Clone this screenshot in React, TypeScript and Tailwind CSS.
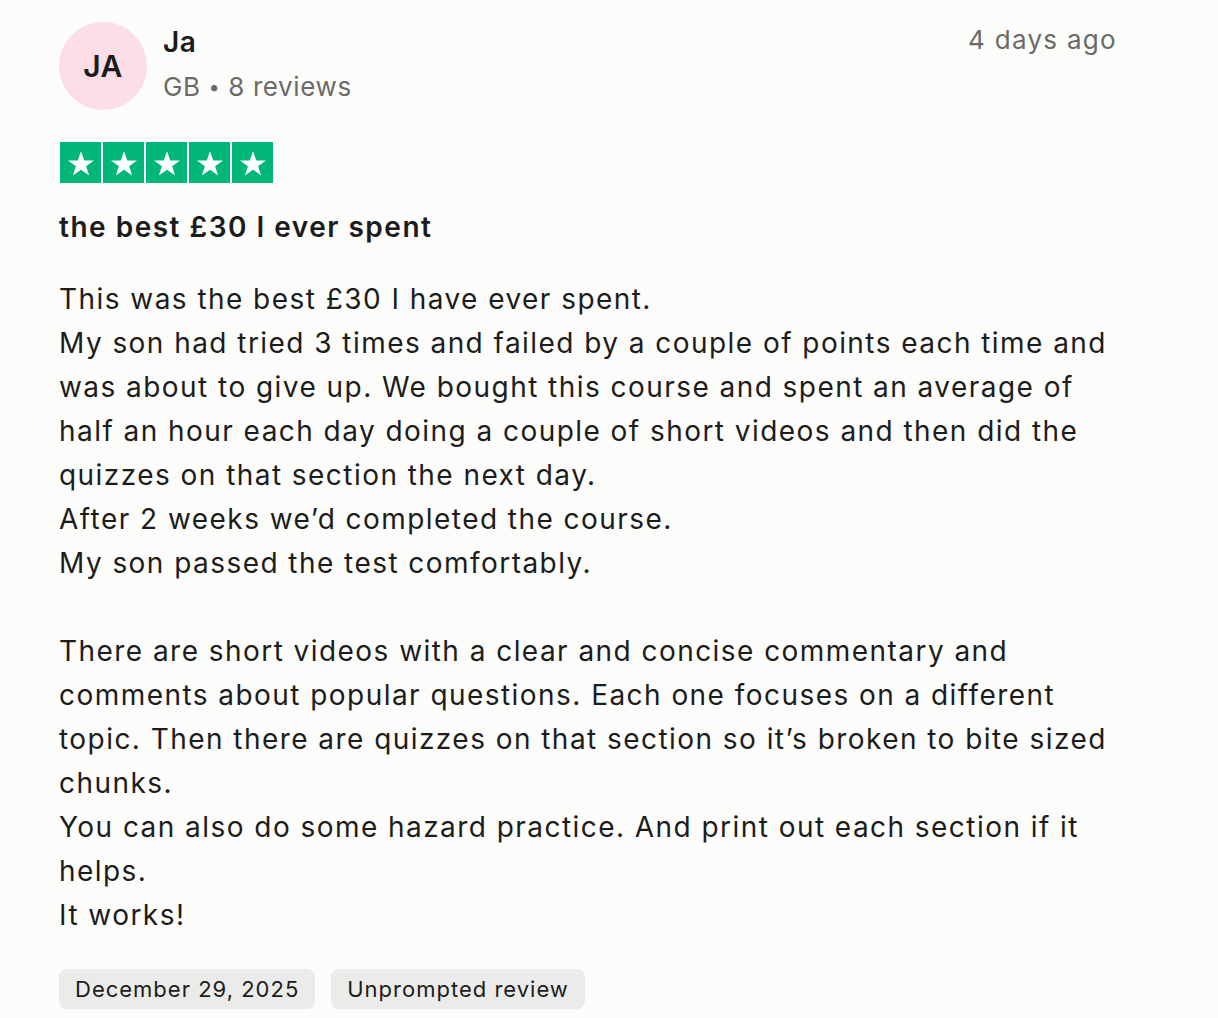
const body = [
    "This was the best £30 I have ever spent.",
    "My son had tried 3 times and failed by a couple of points each time and was about to give up. We bought this course and spent an average of half an hour each day doing a couple of short videos and then did the quizzes on that section the next day.",
    "After 2 weeks we’d completed the course.",
    "My son passed the test comfortably.",
    "",
    "There are short videos with a clear and concise commentary and comments about popular questions. Each one focuses on a different topic. Then there are quizzes on that section so it’s broken to bite sized chunks.",
    "You can also do some hazard practice. And print out each section if it helps.",
    "It works!",
];

function StarBox() {
    return (
        <div className="w-[41px] h-[41px] bg-[#00b67a] flex items-center justify-center">
            <svg viewBox="0 0 24 24" className="w-[30px] h-[30px]" fill="#fff">
                <path d="M12 2.5l2.6 7.4h7.8l-6.3 4.6 2.4 7.5L12 17.3V2.5z M12 2.5L9.4 9.9H1.6l6.3 4.6-2.4 7.5 6.5-4.7" />
            </svg>
        </div>
    );
}

export default function App() {
    return (
        <div className="min-h-screen bg-[#fcfcfa] font-['Inter',sans-serif] text-[#1c1c1c]">
            <div className="w-[1062px] ml-[59px] pt-[22px]">
                <div className="flex justify-between items-start">
                    <div className="flex items-center gap-4">
                        <div className="w-[88px] h-[88px] rounded-full bg-[#fddde6] flex items-center justify-center text-[30px] font-semibold tracking-[0.5px]">
                            JA
                        </div>
                        <div className="flex flex-col">
                            <span className="text-[28px] font-semibold leading-[40px] -mt-[4px] tracking-[0.5px]">Ja</span>
                            <span className="text-[26px] leading-[40px] mt-[5px] text-[#6b6a66] tracking-[0.6px]">
                                GB <span className="text-[20px] align-[2px]">•</span> 8 reviews
                            </span>
                        </div>
                    </div>
                    <span className="text-[26px] text-[#6b6a66] leading-[40px] -mt-[2px] mr-[4px] tracking-[1.3px]">4 days ago</span>
                </div>

                <div className="flex gap-[2px] mt-[32px] ml-px">
                    {[0, 1, 2, 3, 4].map((i) => (
                        <StarBox key={i} />
                    ))}
                </div>

                <h2 className="mt-[24px] text-[28px] font-semibold leading-[40px] tracking-[1.5px]">the best £30 I ever spent</h2>

                <div className="mt-[30px] text-[28px] leading-[44px] tracking-[1.45px]">
                    {body.map((line, i) =>
                        line ? <p key={i}>{line}</p> : <p key={i} className="h-[44px]" />
                    )}
                </div>

                <div className="flex gap-4 mt-[32px]">
                    <span className="h-[40px] px-4 rounded-lg bg-[#ebebe9] text-[22px] flex items-center tracking-[1px]">December 29, 2025</span>
                    <span className="h-[40px] px-4 rounded-lg bg-[#ebebe9] text-[22px] flex items-center tracking-[1px]">Unprompted review</span>
                </div>
            </div>
        </div>
    );
}
